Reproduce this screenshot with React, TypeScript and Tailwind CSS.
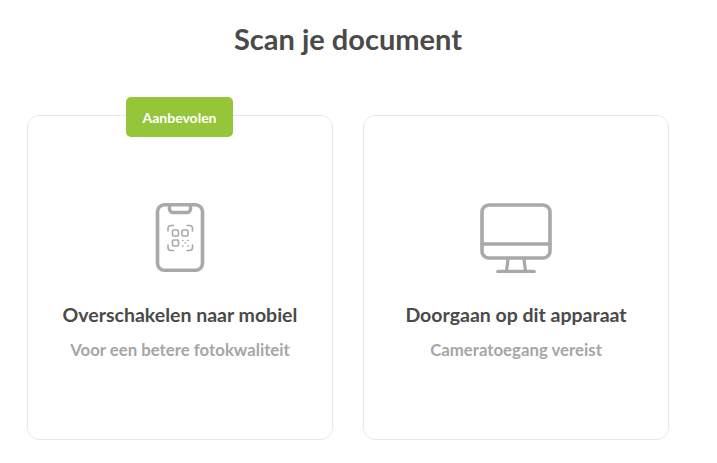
function PhoneIcon() {
  return (
    <svg width="52" height="72" viewBox="0 0 52 72" fill="none" stroke="#a9a9a9" strokeLinecap="round" strokeLinejoin="round">
      <rect x="3.5" y="1.8" width="45" height="65.5" rx="7" strokeWidth="3.6" />
      <path d="M15.5 2.5v3.5a3.5 3.5 0 0 0 3.5 3.5h14a3.5 3.5 0 0 0 3.5-3.5V2.5" strokeWidth="3.4" />
      <g strokeWidth="1.6">
        <path d="M14 28v-2.5a3 3 0 0 1 3-3h2.5M33 22.5h2.5a3 3 0 0 1 3 3V28M14 42v2.5a3 3 0 0 0 3 3h2.5M38.5 42v2.5a3 3 0 0 1-3 3H33" />
        <rect x="18.5" y="27" width="6" height="6" rx="1.2" />
        <rect x="28" y="27" width="6" height="6" rx="1.2" />
        <rect x="18.5" y="37" width="6" height="6" rx="1.2" />
      </g>
      <g strokeWidth="1.3">
        <path d="M28.5 37.5h.6M33.5 37.5h.6M31 40h.6M28.5 43h.6M34 43h.6" />
      </g>
    </svg>
  );
}

function MonitorIcon() {
  return (
    <svg width="72" height="70" viewBox="0 0 72 70" fill="none" stroke="#a9a9a9" strokeWidth="3.6" strokeLinecap="round" strokeLinejoin="round">
      <rect x="2" y="2" width="68" height="53" rx="7" />
      <path d="M2 41h68" />
      <path d="M28 56l-1.5 12M44 56l1.5 12" strokeWidth="3.2" />
      <path d="M18 68.5h36" />
    </svg>
  );
}

function OptionCard({ title, subtitle, badge, icon }: { title: string; subtitle: string; badge?: string; icon: React.ReactNode }) {
  return (
    <div className="relative flex h-[325px] w-[306px] flex-col items-center rounded-[12px] border border-[#e8e8e8] bg-white pt-[87px]">
      {badge && (
        <div className="absolute left-[98px] top-[-19px] flex h-[40px] w-[107px] items-center justify-center rounded-[5px] bg-[#95c539] text-[14px] font-bold text-white">
          {badge}
        </div>
      )}
      <div className="flex h-[72px] items-start justify-center">{icon}</div>
      <h2 className="mt-[27px] text-[19.5px] leading-[26px] font-bold text-[#4a4a4a]">{title}</h2>
      <p className="mt-[11px] text-[16.8px] leading-[22px] font-bold text-[#a6a6a6]">{subtitle}</p>
    </div>
  );
}

export default function App() {
  return (
    <div className="h-[463px] w-[717px] overflow-hidden bg-white pl-[27px] font-['Lato',sans-serif]">
      <h1 className="mt-[20px] w-[642px] text-center text-[29px] leading-[38px] font-bold text-[#4a4a4a]">Scan je document</h1>
      <div className="mt-[57px] flex gap-[30px]">
        <OptionCard title="Overschakelen naar mobiel" subtitle="Voor een betere fotokwaliteit" badge="Aanbevolen" icon={<PhoneIcon />} />
        <OptionCard title="Doorgaan op dit apparaat" subtitle="Cameratoegang vereist" icon={<MonitorIcon />} />
      </div>
    </div>
  );
}
